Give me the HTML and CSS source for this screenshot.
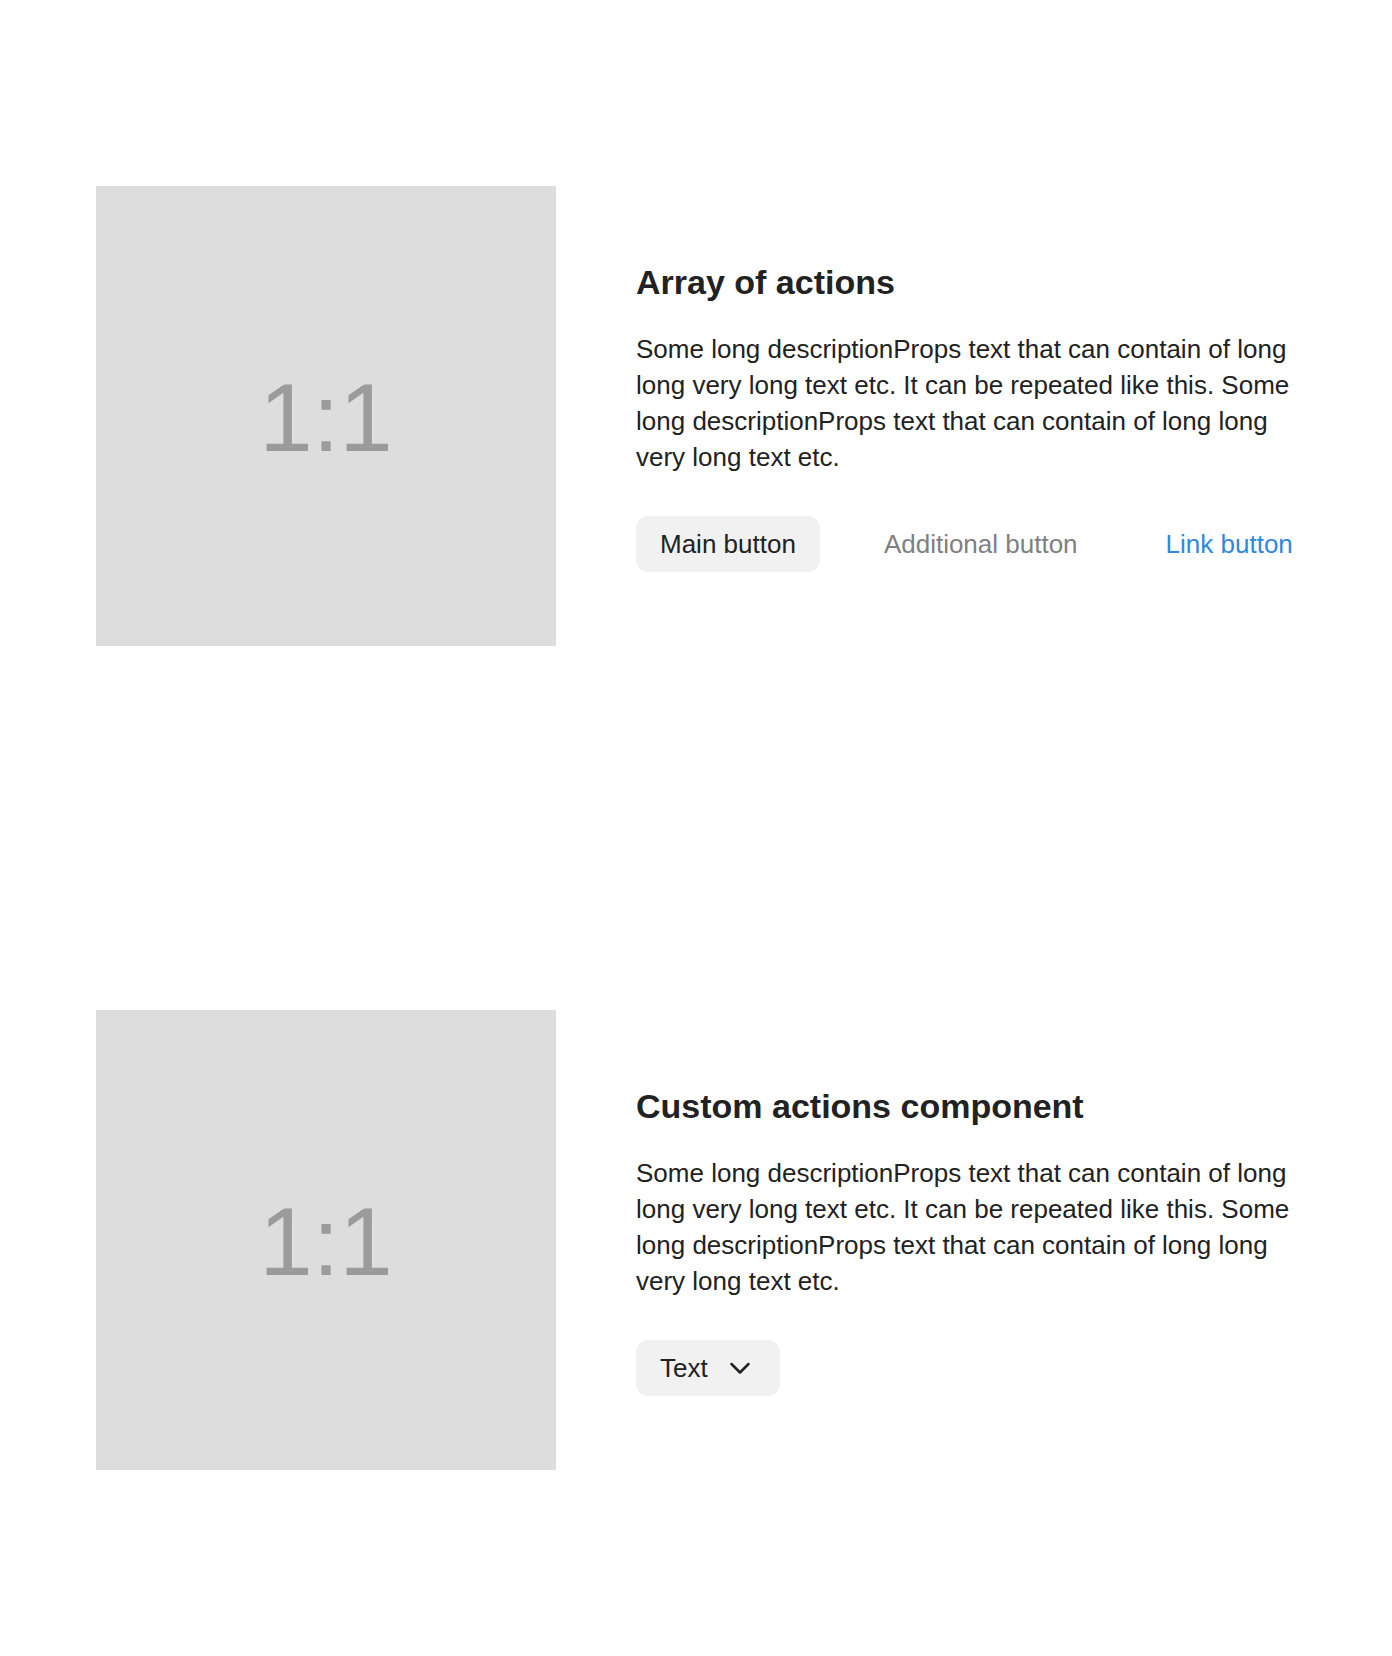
FILE: index.html
```html
<!DOCTYPE html>
<html lang="en">
<head>
<meta charset="utf-8">
<title>Actions</title>
<link rel="stylesheet" href="styles.css">
</head>
<body>
<main class="page">
  <section class="card">
    <div class="media"><span class="ratio">1:1</span></div>
    <div class="content">
      <h2 class="title">Array of actions</h2>
      <p class="desc">Some long descriptionProps text that can contain of long long very long text etc. It can be repeated like this. Some long descriptionProps text that can contain of long long very long text etc.</p>
      <div class="actions">
        <button class="btn btn-main">Main button</button>
        <button class="btn btn-additional">Additional button</button>
        <button class="btn btn-link">Link button</button>
      </div>
    </div>
  </section>
  <section class="card">
    <div class="media"><span class="ratio">1:1</span></div>
    <div class="content">
      <h2 class="title">Custom actions component</h2>
      <p class="desc">Some long descriptionProps text that can contain of long long very long text etc. It can be repeated like this. Some long descriptionProps text that can contain of long long very long text etc.</p>
      <div class="actions">
        <button class="btn btn-main btn-select">Text
          <svg class="chevron" width="24" height="24" viewBox="0 0 24 24" fill="none" stroke="currentColor" stroke-width="2.5" stroke-linecap="round" stroke-linejoin="round"><polyline points="3.5 8 12 16.5 20.5 8"/></svg>
        </button>
      </div>
    </div>
  </section>
</main>
</body>
</html>
```
FILE: styles.css
```css
* { box-sizing: border-box; }
html, body { margin: 0; padding: 0; background: #ffffff; }
body {
  font-family: "Liberation Sans", Arial, sans-serif;
  color: #222222;
}
.page {
  display: flex;
  flex-direction: column;
  gap: 364px;
  padding: 186px 96px;
}
.card {
  display: flex;
  align-items: center;
  gap: 80px;
}
.media {
  flex: 0 0 460px;
  width: 460px;
  height: 460px;
  background: #dddddd;
  display: flex;
  align-items: center;
  justify-content: center;
}
.ratio {
  font-size: 96px;
  line-height: 1;
  color: #9b9b9b;
  padding-top: 4px;
}
.content {
  flex: 1;
  min-width: 0;
  padding-top: 2px;
}
.title {
  margin: 0 0 29px;
  font-size: 34px;
  line-height: 40px;
  font-weight: 700;
  color: #222222;
}
.desc {
  margin: 0 0 41px;
  font-size: 26px;
  line-height: 36px;
  color: #222222;
}
.actions {
  display: flex;
  gap: 40px;
}
.btn {
  flex-shrink: 0;
  display: inline-flex;
  align-items: center;
  height: 56px;
  padding: 0 24px;
  border: 0;
  border-radius: 12px;
  background: transparent;
  font-family: inherit;
  font-size: 26px;
  white-space: nowrap;
  cursor: pointer;
}
.btn-main { background: #f1f1f1; color: #222222; }
.btn-additional { color: #808080; }
.btn-link { color: #2f88e0; }
.btn-select { gap: 20px; padding-right: 28px; }
.chevron { display: block; color: #222222; }
```
